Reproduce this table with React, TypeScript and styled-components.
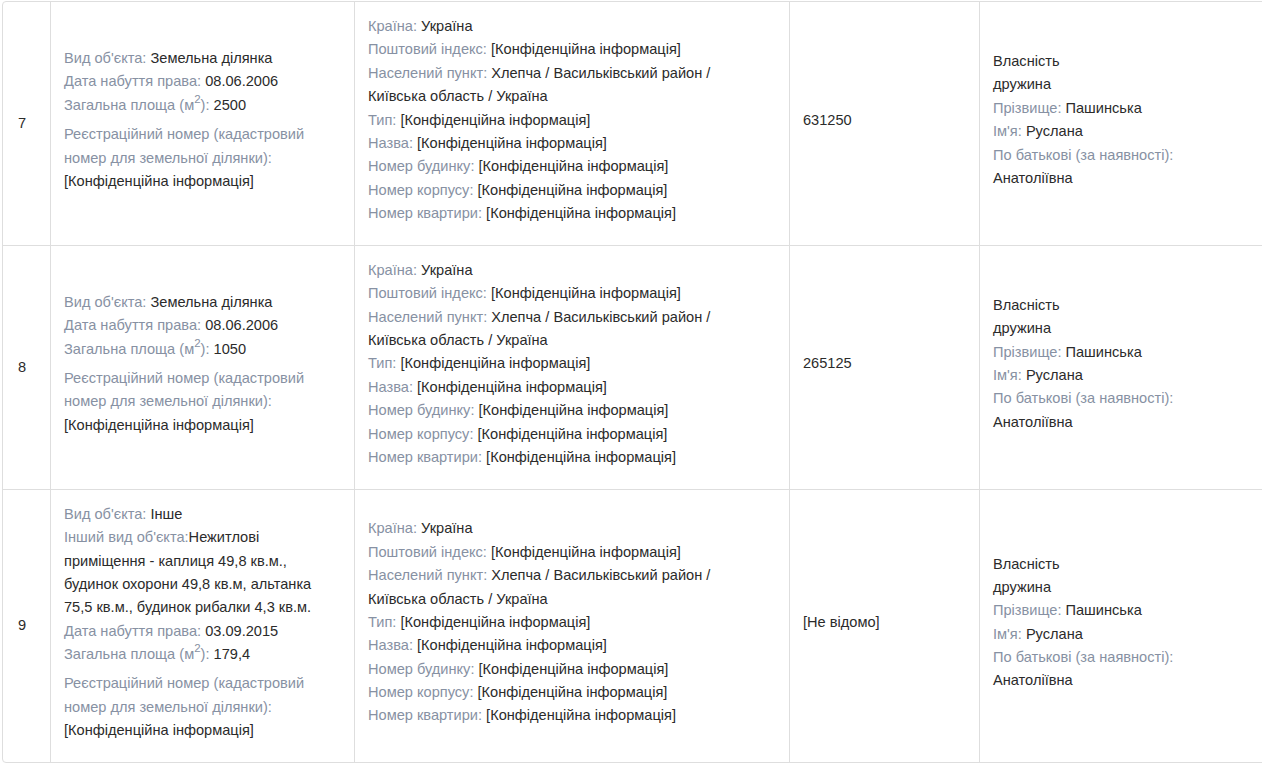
import React from 'react';
import styled, { createGlobalStyle } from 'styled-components';

const GlobalStyle = createGlobalStyle`
  html, body {
    margin: 0;
    padding: 0;
    background: #fff;
    overflow: hidden;
  }
  body {
    font-family: "Liberation Sans", Arial, sans-serif;
    font-size: 14.6px;
    color: #333;
  }
`;

const Page = styled.div`
  padding: 1px 0 0 2px;
  width: 1262px;
  height: 771px;
  box-sizing: border-box;
  overflow: hidden;
`;

const Table = styled.div`
  width: 1320px;
  border: 1px solid #dedede;
  border-radius: 4px;
`;

const Row = styled.div<{ $last?: boolean }>`
  display: grid;
  grid-template-columns: 48px 304px 435px 190px 1fr;
  border-bottom: ${p => (p.$last ? 'none' : '1px solid #dedede')};
`;

const Cell = styled.div<{ $index?: boolean; $last?: boolean }>`
  display: flex;
  flex-direction: column;
  justify-content: center;
  padding: ${p => (p.$index ? '16px 10px 16px 15px' : '13px 14px 19.5px 13px')};
  line-height: 23.375px;
  border-right: ${p => (p.$last ? 'none' : '1px solid #dedede')};
  min-width: 0;
`;

const Line = styled.div<{ $gap?: boolean }>`
  margin-top: ${p => (p.$gap ? '6px' : '0')};
`;

const Label = styled.span`
  color: #8791a3;
`;

const Value = styled.span<{ $block?: boolean }>`
  color: #2b2b2b;
  display: ${p => (p.$block ? 'block' : 'inline')};
`;

const Sup = styled.sup`
  font-size: 11.5px;
  line-height: 0;
  vertical-align: 7px;
`;

type Obj = {
  n: string;
  kind: string;
  other?: string;
  date: string;
  area: string;
  cost: string;
};

const rows: Obj[] = [
  { n: '7', kind: 'Земельна ділянка', date: '08.06.2006', area: '2500', cost: '631250' },
  { n: '8', kind: 'Земельна ділянка', date: '08.06.2006', area: '1050', cost: '265125' },
  {
    n: '9',
    kind: 'Інше',
    other:
      'Нежитлові приміщення - каплиця 49,8 кв.м., будинок охорони 49,8 кв.м, альтанка 75,5 кв.м., будинок рибалки 4,3 кв.м.',
    date: '03.09.2015',
    area: '179,4',
    cost: '[Не відомо]',
  },
];

const CONF = '[Конфіденційна інформація]';

const ObjectCell = ({ o }: { o: Obj }) => (
  <Cell>
    <Line>
      <Label>Вид об'єкта: </Label>
      <Value>{o.kind}</Value>
    </Line>
    {o.other && (
      <Line>
        <Label>Інший вид об'єкта:</Label>
        <Value>{o.other}</Value>
      </Line>
    )}
    <Line>
      <Label>Дата набуття права: </Label>
      <Value>{o.date}</Value>
    </Line>
    <Line>
      <Label>
        Загальна площа (м<Sup>2</Sup>):{' '}
      </Label>
      <Value>{o.area}</Value>
    </Line>
    <Line $gap>
      <Label>Реєстраційний номер (кадастровий номер для земельної ділянки): </Label>
      <Value $block>{CONF}</Value>
    </Line>
  </Cell>
);

const AddressCell = () => (
  <Cell>
    <Line>
      <Label>Країна: </Label>
      <Value>Україна</Value>
    </Line>
    <Line>
      <Label>Поштовий індекс: </Label>
      <Value>{CONF}</Value>
    </Line>
    <Line>
      <Label>Населений пункт: </Label>
      <Value>
        Хлепча / Васильківський район /
        <br />
        Київська область / Україна
      </Value>
    </Line>
    <Line>
      <Label>Тип: </Label>
      <Value>{CONF}</Value>
    </Line>
    <Line>
      <Label>Назва: </Label>
      <Value>{CONF}</Value>
    </Line>
    <Line>
      <Label>Номер будинку: </Label>
      <Value>{CONF}</Value>
    </Line>
    <Line>
      <Label>Номер корпусу: </Label>
      <Value>{CONF}</Value>
    </Line>
    <Line>
      <Label>Номер квартири: </Label>
      <Value>{CONF}</Value>
    </Line>
  </Cell>
);

const OwnerCell = () => (
  <Cell $last>
    <Line>
      <Value>Власність</Value>
    </Line>
    <Line>
      <Value>дружина</Value>
    </Line>
    <Line>
      <Label>Прізвище: </Label>
      <Value>Пашинська</Value>
    </Line>
    <Line>
      <Label>Ім'я: </Label>
      <Value>Руслана</Value>
    </Line>
    <Line>
      <Label>По батькові (за наявності):</Label>
    </Line>
    <Line>
      <Value>Анатоліївна</Value>
    </Line>
  </Cell>
);

export default function App() {
  return (
    <Page>
      <GlobalStyle />
      <Table>
        {rows.map((o, i) => (
          <Row key={o.n} $last={i === rows.length - 1}>
            <Cell $index>
              <Value>{o.n}</Value>
            </Cell>
            <ObjectCell o={o} />
            <AddressCell />
            <Cell>
              <Value>{o.cost}</Value>
            </Cell>
            <OwnerCell />
          </Row>
        ))}
      </Table>
    </Page>
  );
}
